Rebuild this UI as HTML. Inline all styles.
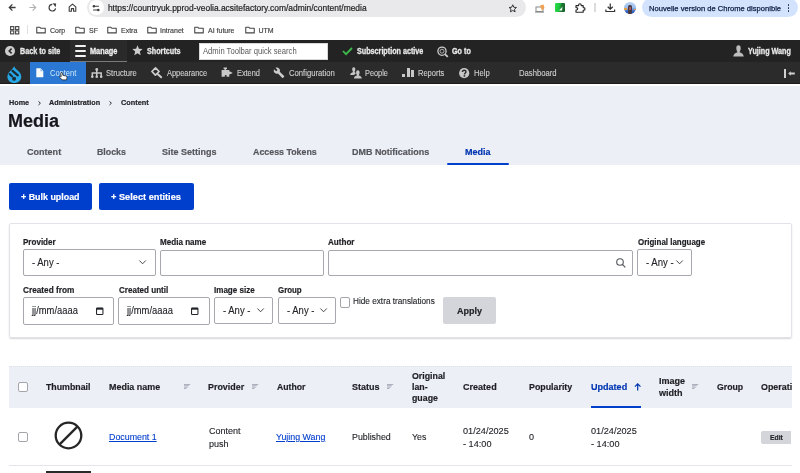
<!DOCTYPE html>
<html><head><meta charset="utf-8">
<style>
*{box-sizing:border-box;margin:0;padding:0}
html,body{width:800px;height:473px;overflow:hidden;background:#fff;font-family:"Liberation Sans", sans-serif}
body{position:relative}
.a{position:absolute;white-space:nowrap;line-height:1}
svg.a{overflow:visible}
</style></head><body>
<div id="root" style="position:absolute;left:0;top:0;width:800px;height:473px;will-change:transform">
<div class="a" style="left:0px;top:0px;width:800px;height:21px;background:#fff"></div>
<svg class="a" style="left:8px;top:3px;" width="9" height="9" viewBox="0 0 9 9"><path d="M7.6 4.5H1.6M4.4 1.4L1.3 4.5L4.4 7.6" fill="none" stroke="#3c3c3c" stroke-width="1.3"/></svg>
<svg class="a" style="left:28px;top:3px;" width="9" height="9" viewBox="0 0 9 9"><path d="M1.4 4.5H7.4M4.6 1.4L7.7 4.5L4.6 7.6" fill="none" stroke="#b0b0b0" stroke-width="1.1"/></svg>
<svg class="a" style="left:48px;top:3px;" width="9" height="9" viewBox="0 0 9 9"><path d="M7.6 5.4A3.3 3.3 0 1 1 4.3 1.4" fill="none" stroke="#3c3c3c" stroke-width="1.15"/><path d="M4.6 0.2L8.2 0.6L7.6 4.2Z" fill="#3c3c3c"/></svg>
<svg class="a" style="left:68px;top:2.9px;" width="9" height="9" viewBox="0 0 9 9"><path d="M1.2 8.2V3.9L4.5 1.1L7.8 3.9V8.2H5.6V5.6H3.4V8.2Z" fill="none" stroke="#3c3c3c" stroke-width="1.1" stroke-linejoin="round"/></svg>
<div class="a" style="left:87px;top:-2px;width:439px;height:18.6px;background:#e9e9eb;border-radius:9.5px"></div>
<div class="a" style="left:89px;top:0px;width:14.5px;height:14.5px;border-radius:50%;background:#fff"></div>
<svg class="a" style="left:92px;top:3.5px;" width="9" height="8" viewBox="0 0 9 8"><path d="M1.9 2.3H6.9M1.1 6H6.3" stroke="#3c3c3c" stroke-width="1.1"/><circle cx="1.9" cy="2.2" r="1.2" fill="#3c3c3c"/><circle cx="6.3" cy="6" r="1.25" fill="#3c3c3c"/></svg>
<div class="a" style="left:107.90px;top:4px;font-size:8.450px;font-weight:normal;color:#1f1f1f;-webkit-text-stroke:0.2px currentColor;">https://countryuk.pprod-veolia.acsitefactory.com/admin/content/media</div>
<svg class="a" style="left:507.5px;top:3.5px;" width="9.5" height="9" viewBox="0 0 10 10"><path d="M5 0.9L6.2 3.6L9.1 3.9L6.9 5.8L7.6 8.7L5 7.2L2.4 8.7L3.1 5.8L0.9 3.9L3.8 3.6Z" fill="none" stroke="#333" stroke-width="1.1" stroke-linejoin="round"/></svg>
<svg class="a" style="left:535px;top:3.5px;" width="11" height="9" viewBox="0 0 11 9"><rect x="1" y="3" width="7" height="4.5" fill="none" stroke="#8a8a8a" stroke-width="1"/><path d="M0 8.2H9" stroke="#8a8a8a" stroke-width="0.9"/><path d="M5 1.5L8.5 0.5L9.5 4L7 6.5Z" fill="#f0a050"/></svg>
<div class="a" style="left:555px;top:3.2px;width:9.600000000000023px;height:9.0px;background:linear-gradient(100deg,#2ee04a 0%,#1cc23a 45%,#1d7a34 60%,#1a5a2a 100%);border-radius:1px"></div>
<svg class="a" style="left:557.5px;top:5.5px;" width="5" height="5" viewBox="0 0 5 5"><path d="M1 4.5L4.5 0.8L4 4.5Z" fill="#f0fff0"/></svg>
<svg class="a" style="left:575px;top:3px;" width="11" height="10" viewBox="0 0 11 10"><path d="M1 2.6H3.6V2A1.3 1.3 0 0 1 6.2 2V2.6H8.2V4.6H8.7A1.3 1.3 0 0 1 8.7 7.2H8.2V9.2H1V7H1.5A1.2 1.2 0 0 0 1.5 4.6H1Z" fill="none" stroke="#2a2a2a" stroke-width="1.15" stroke-linejoin="round"/></svg>
<div class="a" style="left:594px;top:3px;width:1.5px;height:8.6px;background:#dcdcdc"></div>
<svg class="a" style="left:604.5px;top:3px;" width="10.5" height="9.5" viewBox="0 0 10.5 9.5"><path d="M5.25 0.5V6M2.7 3.7L5.25 6.2L7.8 3.7M0.9 6.6V8.5H9.6V6.6" fill="none" stroke="#333" stroke-width="1.2"/></svg>
<div class="a" style="left:624px;top:2px;width:12px;height:11.5px;border-radius:50%;overflow:hidden;background:linear-gradient(180deg,#b9d2f5 0%,#9fc0ee 45%,#3d6fc8 75%,#1f48a8 100%)"><div style="position:absolute;left:0;top:6px;width:3px;height:1.6px;background:#e8a040"></div><div style="position:absolute;right:0;top:7px;width:2.5px;height:1.4px;background:#e89a50"></div><div style="position:absolute;left:4.2px;top:2.8px;width:3.8px;height:9px;border-radius:1.8px 1.8px 0 0;background:#4a3a44"></div><div style="position:absolute;left:5px;top:5px;width:2.2px;height:2.5px;background:#a0585a"></div></div>
<div class="a" style="left:642.2px;top:-2px;width:155.39999999999998px;height:19px;background:#d3e3fd;border-radius:9.5px"></div>
<div class="a" style="left:649.00px;top:5px;font-size:7.750px;font-weight:normal;color:#0b1d42;transform:scaleX(0.9793);transform-origin:0 0;-webkit-text-stroke:0.25px currentColor;">Nouvelle version de Chrome disponible</div>
<div class="a" style="left:787.6px;top:4.2px;width:1.8px;height:1.8px;border-radius:50%;background:#1c2a48;box-shadow:0 3px 0 #1c2a48,0 6px 0 #1c2a48"></div>
<div class="a" style="left:0px;top:21px;width:800px;height:19px;background:#fff"></div>
<svg class="a" style="left:10px;top:25.5px;" width="9.5" height="8.5" viewBox="0 0 9.5 8.5"><rect x="0.6" y="0.6" width="3.2" height="3" fill="none" stroke="#444" stroke-width="1.1"/><rect x="5.6" y="0.6" width="3.2" height="3" fill="none" stroke="#444" stroke-width="1.1"/><rect x="0.6" y="4.9" width="3.2" height="3" fill="none" stroke="#444" stroke-width="1.1"/><rect x="5.6" y="4.9" width="3.2" height="3" fill="none" stroke="#444" stroke-width="1.1"/></svg>
<div class="a" style="left:27px;top:25px;width:1px;height:9px;background:#e0e0e0"></div>
<svg class="a" style="left:36px;top:25.8px;" width="10" height="7.6" viewBox="0 0 9.7 7.6"><path d="M0.6 1.2H3.5L4.5 2.2H9.1V6.9H0.6Z" fill="none" stroke="#444" stroke-width="1.05" stroke-linejoin="round"/></svg>
<div class="a" style="left:50.00px;top:27px;font-size:7.000px;font-weight:normal;color:#444;-webkit-text-stroke:0.18px currentColor;">Corp</div>
<svg class="a" style="left:75px;top:25.8px;" width="10" height="7.6" viewBox="0 0 9.7 7.6"><path d="M0.6 1.2H3.5L4.5 2.2H9.1V6.9H0.6Z" fill="none" stroke="#444" stroke-width="1.05" stroke-linejoin="round"/></svg>
<div class="a" style="left:89.00px;top:27px;font-size:7.000px;font-weight:normal;color:#444;-webkit-text-stroke:0.18px currentColor;">SF</div>
<svg class="a" style="left:107px;top:25.8px;" width="10" height="7.6" viewBox="0 0 9.7 7.6"><path d="M0.6 1.2H3.5L4.5 2.2H9.1V6.9H0.6Z" fill="none" stroke="#444" stroke-width="1.05" stroke-linejoin="round"/></svg>
<div class="a" style="left:121.00px;top:27px;font-size:7.000px;font-weight:normal;color:#444;-webkit-text-stroke:0.18px currentColor;">Extra</div>
<svg class="a" style="left:146.5px;top:25.8px;" width="10" height="7.6" viewBox="0 0 9.7 7.6"><path d="M0.6 1.2H3.5L4.5 2.2H9.1V6.9H0.6Z" fill="none" stroke="#444" stroke-width="1.05" stroke-linejoin="round"/></svg>
<div class="a" style="left:160.00px;top:27px;font-size:7.000px;font-weight:normal;color:#444;-webkit-text-stroke:0.18px currentColor;">Intranet</div>
<svg class="a" style="left:194px;top:25.8px;" width="10" height="7.6" viewBox="0 0 9.7 7.6"><path d="M0.6 1.2H3.5L4.5 2.2H9.1V6.9H0.6Z" fill="none" stroke="#444" stroke-width="1.05" stroke-linejoin="round"/></svg>
<div class="a" style="left:208.00px;top:27px;font-size:7.000px;font-weight:normal;color:#444;-webkit-text-stroke:0.18px currentColor;">AI future</div>
<svg class="a" style="left:245px;top:25.8px;" width="10" height="7.6" viewBox="0 0 9.7 7.6"><path d="M0.6 1.2H3.5L4.5 2.2H9.1V6.9H0.6Z" fill="none" stroke="#444" stroke-width="1.05" stroke-linejoin="round"/></svg>
<div class="a" style="left:258.50px;top:27px;font-size:7.000px;font-weight:normal;color:#444;-webkit-text-stroke:0.18px currentColor;">UTM</div>
<div class="a" style="left:0px;top:40px;width:800px;height:21.6px;background:#232323"></div>
<div class="a" style="left:69.6px;top:40px;width:57.400000000000006px;height:21.6px;background:#2a2a2a"></div>
<div class="a" style="left:69.6px;top:60.8px;width:57.400000000000006px;height:0.8000000000000043px;background:#7a7a7a"></div>
<div class="a" style="left:5px;top:45.6px;width:10.4px;height:10.6px;border-radius:50%;background:#cdcdcd"></div>
<svg class="a" style="left:7.5px;top:48px;" width="5" height="6" viewBox="0 0 5 6"><path d="M3.6 0.6L1.2 3L3.6 5.4" fill="none" stroke="#232323" stroke-width="1.5"/></svg>
<div class="a" style="left:20.00px;top:48px;font-size:8.136px;font-weight:bold;color:#e8e8e8;transform:scaleX(0.8850);transform-origin:0 0;-webkit-text-stroke:0.30px currentColor;">Back to site</div>
<div class="a" style="left:74.5px;top:44.6px;width:11.700000000000003px;height:2.0px;background:#f2f2f2;border-radius:1px"></div>
<div class="a" style="left:74.5px;top:49.6px;width:11.700000000000003px;height:2.0px;background:#f2f2f2;border-radius:1px"></div>
<div class="a" style="left:74.5px;top:54.6px;width:11.700000000000003px;height:2.0px;background:#f2f2f2;border-radius:1px"></div>
<div class="a" style="left:89.80px;top:47px;font-size:8.305px;font-weight:bold;color:#f0f0f0;transform:scaleX(0.8850);transform-origin:0 0;-webkit-text-stroke:0.30px currentColor;">Manage</div>
<svg class="a" style="left:131.8px;top:44.8px;" width="11" height="11" viewBox="0 0 10 10"><path d="M5 0.3L6.3 3.4L9.7 3.7L7.1 5.9L7.9 9.3L5 7.5L2.1 9.3L2.9 5.9L0.3 3.7L3.7 3.4Z" fill="#cdcdcd"/></svg>
<div class="a" style="left:147.00px;top:48px;font-size:8.136px;font-weight:bold;color:#e8e8e8;transform:scaleX(0.8850);transform-origin:0 0;-webkit-text-stroke:0.30px currentColor;">Shortcuts</div>
<div class="a" style="left:199px;top:43px;width:129px;height:16.6px;background:#fff;border:1px solid #d8d8d8"></div>
<div class="a" style="left:203.00px;top:47px;font-size:8.644px;font-weight:normal;color:#5a5a5a;transform:scaleX(0.8850);transform-origin:0 0;-webkit-text-stroke:0.18px currentColor;-webkit-text-stroke:0;">Admin Toolbar quick search</div>
<svg class="a" style="left:341.5px;top:47.2px;" width="11" height="8.5" viewBox="0 0 11 8.5"><path d="M1 4L4 7.2L10 1" fill="none" stroke="#3dbb4c" stroke-width="1.8"/></svg>
<div class="a" style="left:356.60px;top:48px;font-size:8.136px;font-weight:bold;color:#e8e8e8;transform:scaleX(0.8850);transform-origin:0 0;-webkit-text-stroke:0.30px currentColor;">Subscription active</div>
<svg class="a" style="left:436.5px;top:45.5px;" width="12.5" height="12" viewBox="0 0 12.5 12"><circle cx="5" cy="5.2" r="4.1" fill="none" stroke="#cdcdcd" stroke-width="1.3"/><circle cx="5" cy="5.2" r="2" fill="none" stroke="#bdbdbd" stroke-width="0.9"/><path d="M8.1 8.3L10.8 10.9" stroke="#cdcdcd" stroke-width="1.8"/></svg>
<div class="a" style="left:452.30px;top:48px;font-size:8.136px;font-weight:bold;color:#e8e8e8;transform:scaleX(0.8850);transform-origin:0 0;-webkit-text-stroke:0.30px currentColor;">Go to</div>
<svg class="a" style="left:732.8px;top:44.6px;" width="11" height="11.6" viewBox="0 0 11 11.6"><path d="M5.5 0.3C3.9 0.3 3.3 1.6 3.3 3.3C3.3 5 4.1 6.6 4.5 7.2C2.8 7.8 0.6 8.5 0.2 11.4H10.8C10.4 8.5 8.2 7.8 6.5 7.2C6.9 6.6 7.7 5 7.7 3.3C7.7 1.6 7.1 0.3 5.5 0.3Z" fill="#bdbdbd"/></svg>
<div class="a" style="left:748.00px;top:48px;font-size:8.136px;font-weight:bold;color:#e8e8e8;transform:scaleX(0.8850);transform-origin:0 0;-webkit-text-stroke:0.30px currentColor;">Yujing Wang</div>
<div class="a" style="left:0px;top:61.6px;width:800px;height:20.999999999999993px;background:#2b2b2b"></div>
<div class="a" style="left:0px;top:82.6px;width:800px;height:1.4000000000000057px;background:#1b1b1b"></div>
<div class="a" style="left:0px;top:84px;width:800px;height:2px;background:#fff"></div>
<svg class="a" style="left:6.5px;top:65.5px;" width="14.5" height="17.2" viewBox="0 0 14.5 17.2"><path d="M7.05 0.2C6.2 2.6 4.2 3.9 2.3 5.9C0.9 7.4 0.4 9.2 0.4 10.8C0.4 14.5 3.4 17.1 7.25 17.1C11.1 17.1 14.3 14.5 14.3 10.8C14.3 9.2 13.8 7.4 12.3 5.9C10.3 3.9 7.9 2.6 7.05 0.2Z" fill="#27a6e6"/><path d="M5.6 4.9L10.8 9.3" stroke="#1d2a33" stroke-width="2.4" stroke-linecap="round"/><path d="M2.7 8.0L5.1 10.5" stroke="#1d2a33" stroke-width="2.1" stroke-linecap="round"/><circle cx="7.1" cy="12.7" r="2.0" fill="#1d2a33"/></svg>
<div class="a" style="left:29.5px;top:61.6px;width:56.8px;height:21.999999999999993px;background:#2b78d4"></div>
<svg class="a" style="left:36px;top:68px;" width="7.6" height="9.5" viewBox="0 0 7.6 9.5"><path d="M0.3 0.3H4.6L7.3 3V9.2H0.3Z" fill="#fafafa"/><path d="M4.4 0.4V3.2H7.2" fill="#9cc0ec"/></svg>
<div class="a" style="left:49.70px;top:69px;font-size:8.475px;font-weight:normal;color:#cfeaf8;transform:scaleX(0.8850);transform-origin:0 0;-webkit-text-stroke:0.12px currentColor;-webkit-text-stroke:0;">Content</div>
<svg class="a" style="left:59.3px;top:71.6px;" width="9" height="8.4" viewBox="0 0 9 8.4"><path d="M2.2 0.6C2.8 0.3 3.4 0.6 3.5 1.2L3.8 3.2L6.6 3.9C7.6 4.2 8.2 4.9 8 5.9L7.5 7.9H3.2L0.7 5.3C0.3 4.8 0.8 4.1 1.5 4.3L2.2 4.6L1.8 1.4C1.7 1 1.9 0.7 2.2 0.6Z" fill="#fff" stroke="#1a1a1a" stroke-width="0.8"/></svg>
<svg class="a" style="left:90.8px;top:67.8px;" width="11.5" height="10.5" viewBox="0 0 11.5 10.5"><circle cx="5.75" cy="1.5" r="1.4" fill="#c8c8c8"/><path d="M5.75 1.5V9M1.3 9V5.1H10.2V9" fill="none" stroke="#c8c8c8" stroke-width="1.5"/><circle cx="1.3" cy="8.8" r="1.3" fill="#c8c8c8"/><circle cx="5.75" cy="8.8" r="1.3" fill="#c8c8c8"/><circle cx="10.2" cy="8.8" r="1.3" fill="#c8c8c8"/></svg>
<div class="a" style="left:106.00px;top:69px;font-size:8.588px;font-weight:normal;color:#cfcfcf;transform:scaleX(0.8850);transform-origin:0 0;-webkit-text-stroke:0.12px currentColor;">Structure</div>
<svg class="a" style="left:151.3px;top:67.4px;" width="11.5" height="11" viewBox="0 0 11.5 11"><path d="M4.5 0.9L8.1 4.5L4.4 8.1L0.9 4.5Z" fill="none" stroke="#cdcdcd" stroke-width="1.7" stroke-linejoin="round"/><path d="M6.9 7.2L10.2 10.3" stroke="#cdcdcd" stroke-width="1.9" stroke-linecap="round"/></svg>
<div class="a" style="left:166.80px;top:69px;font-size:8.418px;font-weight:normal;color:#cfcfcf;transform:scaleX(0.8850);transform-origin:0 0;-webkit-text-stroke:0.12px currentColor;">Appearance</div>
<svg class="a" style="left:221px;top:67.4px;" width="12" height="10.2" viewBox="0 0 12 10.2"><path d="M2.6 0.5H6V2.1H5.1V3H8.3V4.5H9.1L11.8 5.9L9.1 7.2H8.3V9.7H5.6V8.8A0.9 0.9 0 0 0 3.8 8.8V9.7H0.6V3H3.5V2.1H2.6Z" fill="#c8c8c8"/></svg>
<div class="a" style="left:236.60px;top:69px;font-size:8.305px;font-weight:normal;color:#cfcfcf;transform:scaleX(0.8850);transform-origin:0 0;-webkit-text-stroke:0.12px currentColor;">Extend</div>
<svg class="a" style="left:273.3px;top:67.0px;" width="12" height="11.5" viewBox="0 0 24 24"><path d="M22.7 19l-9.1-9.1c.9-2.3.4-5-1.5-6.9-2-2-5-2.4-7.4-1.3L9 6 6 9 1.6 4.7C.4 7.1.9 10.1 2.9 12.1c1.9 1.9 4.6 2.4 6.9 1.5l9.1 9.1c.4.4 1 .4 1.4 0l2.3-2.3c.5-.4.5-1.1.1-1.4z" fill="#cdcdcd"/></svg>
<div class="a" style="left:289.40px;top:69px;font-size:8.701px;font-weight:normal;color:#cfcfcf;transform:scaleX(0.8850);transform-origin:0 0;-webkit-text-stroke:0.12px currentColor;">Configuration</div>
<svg class="a" style="left:349.6px;top:67.2px;" width="12" height="11.6" viewBox="0 0 12 11.6"><path d="M3.7 0.3C2.6 0.3 2.2 1.2 2.2 2.3C2.2 3.5 2.8 4.6 3.1 5C1.9 5.5 0.4 5.9 0.1 7.9H4.2C4.6 7.2 5.2 6.8 5.8 6.5L5.9 5.9L4.4 5C4.8 4.6 5.3 3.5 5.3 2.3C5.3 1.2 4.9 0.3 3.7 0.3Z" fill="#c4c4c4"/><path d="M7.8 3.2C6.6 3.2 6.1 4.2 6.1 5.4C6.1 6.7 6.8 7.9 7.1 8.3C5.8 8.8 4.2 9.3 3.9 11.4H11.8C11.5 9.3 9.9 8.8 8.6 8.3C8.9 7.9 9.6 6.7 9.6 5.4C9.6 4.2 9.1 3.2 7.8 3.2Z" fill="#c4c4c4"/></svg>
<div class="a" style="left:365.40px;top:69px;font-size:8.305px;font-weight:normal;color:#cfcfcf;transform:scaleX(0.8850);transform-origin:0 0;-webkit-text-stroke:0.12px currentColor;">People</div>
<div class="a" style="left:402.2px;top:73.8px;width:3.0px;height:3.6000000000000085px;background:#c8c8c8"></div>
<div class="a" style="left:406.6px;top:67.8px;width:3.1999999999999886px;height:9.600000000000009px;background:#c8c8c8"></div>
<div class="a" style="left:411px;top:70px;width:3px;height:7.400000000000006px;background:#c8c8c8"></div>
<div class="a" style="left:417.70px;top:69px;font-size:8.475px;font-weight:normal;color:#cfcfcf;transform:scaleX(0.8850);transform-origin:0 0;-webkit-text-stroke:0.12px currentColor;">Reports</div>
<svg class="a" style="left:458.8px;top:67.8px;" width="10.4" height="10.4" viewBox="0 0 10.4 10.4"><circle cx="5.2" cy="5.2" r="5.1" fill="#c8c8c8"/><path d="M3.4 4C3.4 2.9 4.2 2.2 5.2 2.2C6.3 2.2 7 2.9 7 3.8C7 5 5.5 5.1 5.5 6.4" fill="none" stroke="#2b2b2b" stroke-width="1.4"/><rect x="4.6" y="7.2" width="1.6" height="1.5" fill="#2b2b2b"/></svg>
<div class="a" style="left:473.80px;top:69px;font-size:8.588px;font-weight:normal;color:#cfcfcf;transform:scaleX(0.8850);transform-origin:0 0;-webkit-text-stroke:0.12px currentColor;">Help</div>
<div class="a" style="left:518.70px;top:69px;font-size:8.701px;font-weight:normal;color:#cfcfcf;transform:scaleX(0.8850);transform-origin:0 0;-webkit-text-stroke:0.12px currentColor;">Dashboard</div>
<div class="a" style="left:784px;top:68.7px;width:2.2000000000000455px;height:8.899999999999991px;background:#d0d0d0"></div>
<svg class="a" style="left:788.3px;top:70.6px;" width="7" height="5" viewBox="0 0 7 5"><path d="M0.2 2.5L2.7 0.2V1.5H6.8V3.5H2.7V4.8Z" fill="#d0d0d0"/></svg>
<div class="a" style="left:0px;top:86px;width:800px;height:78.5px;background:#edeff6"></div>
<div class="a" style="left:9.00px;top:99px;font-size:7.830px;font-weight:bold;color:#232429;transform:scaleX(0.9259);transform-origin:0 0;-webkit-text-stroke:0.20px currentColor;">Home</div>
<svg class="a" style="left:37.7px;top:100.7px;" width="3" height="4.4" viewBox="0 0 3 4.4"><path d="M0.5 0.4L2.4 2.2L0.5 4" fill="none" stroke="#2a2b30" stroke-width="1"/></svg>
<div class="a" style="left:49.40px;top:99px;font-size:7.830px;font-weight:bold;color:#232429;transform:scaleX(0.9259);transform-origin:0 0;-webkit-text-stroke:0.20px currentColor;">Administration</div>
<svg class="a" style="left:108.8px;top:100.7px;" width="3" height="4.4" viewBox="0 0 3 4.4"><path d="M0.5 0.4L2.4 2.2L0.5 4" fill="none" stroke="#2a2b30" stroke-width="1"/></svg>
<div class="a" style="left:120.60px;top:99px;font-size:7.938px;font-weight:bold;color:#232429;transform:scaleX(0.9259);transform-origin:0 0;-webkit-text-stroke:0.20px currentColor;">Content</div>
<div class="a" style="left:8.43px;top:112px;font-size:18.564px;font-weight:bold;color:#16171c;transform:scaleX(0.9731);transform-origin:0 0;-webkit-text-stroke:0.20px currentColor;">Media</div>
<div class="a" style="left:26.80px;top:147px;font-size:9.774px;font-weight:bold;color:#55565b;transform:scaleX(0.9259);transform-origin:0 0;-webkit-text-stroke:0.20px currentColor;">Content</div>
<div class="a" style="left:97.20px;top:147px;font-size:9.504px;font-weight:bold;color:#55565b;transform:scaleX(0.9259);transform-origin:0 0;-webkit-text-stroke:0.20px currentColor;">Blocks</div>
<div class="a" style="left:161.70px;top:147px;font-size:9.720px;font-weight:bold;color:#55565b;transform:scaleX(0.9259);transform-origin:0 0;-webkit-text-stroke:0.20px currentColor;">Site Settings</div>
<div class="a" style="left:252.50px;top:147px;font-size:9.558px;font-weight:bold;color:#55565b;transform:scaleX(0.9259);transform-origin:0 0;-webkit-text-stroke:0.20px currentColor;">Access Tokens</div>
<div class="a" style="left:351.70px;top:147px;font-size:9.688px;font-weight:bold;color:#55565b;transform:scaleX(0.9259);transform-origin:0 0;-webkit-text-stroke:0.20px currentColor;">DMB Notifications</div>
<div class="a" style="left:465.00px;top:147px;font-size:9.720px;font-weight:bold;color:#0036b1;transform:scaleX(0.9259);transform-origin:0 0;-webkit-text-stroke:0.20px currentColor;">Media</div>
<div class="a" style="left:447px;top:163px;width:62px;height:2.4000000000000057px;background:#003ecc;border-radius:2px"></div>
<div class="a" style="left:9px;top:183px;width:83.3px;height:26.80000000000001px;background:#003ecc;border-radius:2px"></div>
<div class="a" style="left:20.50px;top:192px;font-size:9.612px;font-weight:bold;color:#fff;transform:scaleX(0.9246);transform-origin:0 0;-webkit-text-stroke:0.20px currentColor;">+ Bulk upload</div>
<div class="a" style="left:99px;top:183px;width:94.5px;height:26.80000000000001px;background:#003ecc;border-radius:2px"></div>
<div class="a" style="left:110.50px;top:192px;font-size:9.828px;font-weight:bold;color:#fff;transform:scaleX(0.9392);transform-origin:0 0;-webkit-text-stroke:0.20px currentColor;">+ Select entities</div>
<div class="a" style="left:9px;top:223px;width:782.5px;height:115px;border:1px solid #e2e3e8;border-radius:2px;box-shadow:0 1px 1.5px rgba(0,0,0,0.16)"></div>
<div class="a" style="left:23.00px;top:238px;font-size:8.694px;font-weight:bold;color:#1e1f24;transform:scaleX(0.9259);transform-origin:0 0;-webkit-text-stroke:0.20px currentColor;">Provider</div>
<div class="a" style="left:23px;top:249.4px;width:133.2px;height:26.899999999999995px;border:1px solid #a6a8ad;border-radius:2px;background:#fff"></div>
<div class="a" style="left:32.00px;top:258px;font-size:10.260px;font-weight:normal;color:#232429;transform:scaleX(0.9259);transform-origin:0 0;-webkit-text-stroke:0.12px currentColor;">- Any -</div>
<svg class="a" style="left:139.2px;top:259.9px;" width="7.2" height="4.6" viewBox="0 0 7.2 4.6"><path d="M0.4 0.5L3.6 3.8L6.8 0.5" fill="none" stroke="#2a2b30" stroke-width="0.85"/></svg>
<div class="a" style="left:160.00px;top:238px;font-size:8.748px;font-weight:bold;color:#1e1f24;transform:scaleX(0.9259);transform-origin:0 0;-webkit-text-stroke:0.20px currentColor;">Media name</div>
<div class="a" style="left:160px;top:249.5px;width:163.5px;height:26.400000000000023px;border:1px solid #a6a8ad;border-radius:2px;background:#fff"></div>
<div class="a" style="left:327.80px;top:238px;font-size:8.748px;font-weight:bold;color:#1e1f24;transform:scaleX(0.9259);transform-origin:0 0;-webkit-text-stroke:0.20px currentColor;">Author</div>
<div class="a" style="left:327.7px;top:249.5px;width:305.3px;height:26.400000000000023px;border:1px solid #a6a8ad;border-radius:2px;background:#fff"></div>
<svg class="a" style="left:615.8px;top:257.6px;" width="10" height="10" viewBox="0 0 10 10"><circle cx="4" cy="4" r="3.3" fill="none" stroke="#55565b" stroke-width="1.1"/><path d="M6.4 6.4L9.3 9.3" stroke="#55565b" stroke-width="1.2"/></svg>
<div class="a" style="left:637.80px;top:238px;font-size:8.597px;font-weight:bold;color:#1e1f24;transform:scaleX(0.9259);transform-origin:0 0;-webkit-text-stroke:0.20px currentColor;">Original language</div>
<div class="a" style="left:637.2px;top:249.4px;width:55.09999999999991px;height:26.299999999999972px;border:1px solid #a6a8ad;border-radius:2px;background:#fff"></div>
<div class="a" style="left:646.40px;top:258px;font-size:10.368px;font-weight:normal;color:#232429;transform:scaleX(0.9259);transform-origin:0 0;-webkit-text-stroke:0.12px currentColor;">- Any -</div>
<svg class="a" style="left:676px;top:259.9px;" width="7.2" height="4.6" viewBox="0 0 7.2 4.6"><path d="M0.4 0.5L3.6 3.8L6.8 0.5" fill="none" stroke="#2a2b30" stroke-width="0.85"/></svg>
<div class="a" style="left:22.80px;top:286px;font-size:8.921px;font-weight:bold;color:#1e1f24;transform:scaleX(0.9259);transform-origin:0 0;-webkit-text-stroke:0.20px currentColor;">Created from</div>
<div class="a" style="left:22.8px;top:297px;width:91.2px;height:27.8px;border:1px solid #a6a8ad;border-radius:2px;background:#fff"></div>
<div class="a" style="left:31.60px;top:306px;font-size:10.152px;font-weight:normal;color:#232429;transform:scaleX(0.9259);transform-origin:0 0;-webkit-text-stroke:0.12px currentColor;">jj/mm/aaaa</div>
<svg class="a" style="left:95.8px;top:307.3px;" width="7.5" height="8" viewBox="0 0 7.5 8"><rect x="0.55" y="0.9" width="6.4" height="6.6" rx="0.8" fill="none" stroke="#232429" stroke-width="1.05"/><rect x="0.55" y="0.9" width="6.4" height="1.8" fill="#232429"/></svg>
<div class="a" style="left:118.70px;top:286px;font-size:8.716px;font-weight:bold;color:#1e1f24;transform:scaleX(0.9259);transform-origin:0 0;-webkit-text-stroke:0.20px currentColor;">Created until</div>
<div class="a" style="left:118px;top:297px;width:91.80000000000001px;height:27.8px;border:1px solid #a6a8ad;border-radius:2px;background:#fff"></div>
<div class="a" style="left:127.40px;top:306px;font-size:10.152px;font-weight:normal;color:#232429;transform:scaleX(0.9259);transform-origin:0 0;-webkit-text-stroke:0.12px currentColor;">jj/mm/aaaa</div>
<svg class="a" style="left:191.3px;top:307.3px;" width="7.5" height="8" viewBox="0 0 7.5 8"><rect x="0.55" y="0.9" width="6.4" height="6.6" rx="0.8" fill="none" stroke="#232429" stroke-width="1.05"/><rect x="0.55" y="0.9" width="6.4" height="1.8" fill="#232429"/></svg>
<div class="a" style="left:214.30px;top:286px;font-size:8.683px;font-weight:bold;color:#1e1f24;transform:scaleX(0.9259);transform-origin:0 0;-webkit-text-stroke:0.20px currentColor;">Image size</div>
<div class="a" style="left:214.3px;top:297px;width:59.0px;height:26.8px;border:1px solid #a6a8ad;border-radius:2px;background:#fff"></div>
<div class="a" style="left:223.40px;top:306px;font-size:10.260px;font-weight:normal;color:#232429;transform:scaleX(0.9259);transform-origin:0 0;-webkit-text-stroke:0.12px currentColor;">- Any -</div>
<svg class="a" style="left:256.8px;top:308.2px;" width="7.2" height="4.6" viewBox="0 0 7.2 4.6"><path d="M0.4 0.5L3.6 3.8L6.8 0.5" fill="none" stroke="#2a2b30" stroke-width="0.85"/></svg>
<div class="a" style="left:277.70px;top:286px;font-size:8.532px;font-weight:bold;color:#1e1f24;transform:scaleX(0.9259);transform-origin:0 0;-webkit-text-stroke:0.20px currentColor;">Group</div>
<div class="a" style="left:277.5px;top:297px;width:58.39999999999998px;height:26.8px;border:1px solid #a6a8ad;border-radius:2px;background:#fff"></div>
<div class="a" style="left:286.50px;top:306px;font-size:10.260px;font-weight:normal;color:#232429;transform:scaleX(0.9259);transform-origin:0 0;-webkit-text-stroke:0.12px currentColor;">- Any -</div>
<svg class="a" style="left:319.8px;top:308.2px;" width="7.2" height="4.6" viewBox="0 0 7.2 4.6"><path d="M0.4 0.5L3.6 3.8L6.8 0.5" fill="none" stroke="#2a2b30" stroke-width="0.85"/></svg>
<div class="a" style="left:340.2px;top:297px;width:10.3px;height:10.5px;border:1px solid #a3a5ab;border-radius:2px;background:#fff"></div>
<div class="a" style="left:352.60px;top:297px;font-size:8.888px;font-weight:normal;color:#232429;transform:scaleX(0.9259);transform-origin:0 0;-webkit-text-stroke:0.12px currentColor;">Hide extra translations</div>
<div class="a" style="left:443.3px;top:297.1px;width:52.30000000000001px;height:27.299999999999955px;background:#d4d5da;border-radius:2px"></div>
<div class="a" style="left:457.00px;top:306px;font-size:9.720px;font-weight:bold;color:#232429;transform:scaleX(0.9259);transform-origin:0 0;-webkit-text-stroke:0.20px currentColor;">Apply</div>
<div class="a" style="left:9px;top:365.5px;width:782.5px;height:42px;background:#edeff6;border-top:1px dotted #dfe1e8"></div>
<div class="a" style="left:17.5px;top:382.3px;width:10.2px;height:10px;border:1px solid #a3a5ab;border-radius:2px;background:#fff"></div>
<div class="a" style="left:46.25px;top:382px;font-size:9.504px;font-weight:bold;color:#1e1f24;transform:scaleX(0.9259);transform-origin:0 0;-webkit-text-stroke:0.20px currentColor;">Thumbnail</div>
<div class="a" style="left:109.25px;top:382px;font-size:9.666px;font-weight:bold;color:#1e1f24;transform:scaleX(0.9259);transform-origin:0 0;-webkit-text-stroke:0.20px currentColor;">Media name</div>
<svg class="a" style="left:183.8px;top:383.8px;" width="6.2" height="5" viewBox="0 0 6.2 5"><rect x="0" y="0" width="6.2" height="0.85" fill="#a2a6b3"/><rect x="0" y="1.35" width="5" height="0.85" fill="#a2a6b3"/><rect x="0" y="2.7" width="3.8" height="0.85" fill="#a2a6b3"/><rect x="0" y="4.05" width="2.4" height="0.85" fill="#a2a6b3"/></svg>
<div class="a" style="left:208.40px;top:382px;font-size:9.612px;font-weight:bold;color:#1e1f24;transform:scaleX(0.9259);transform-origin:0 0;-webkit-text-stroke:0.20px currentColor;">Provider</div>
<svg class="a" style="left:251.6px;top:383.8px;" width="6.2" height="5" viewBox="0 0 6.2 5"><rect x="0" y="0" width="6.2" height="0.85" fill="#a2a6b3"/><rect x="0" y="1.35" width="5" height="0.85" fill="#a2a6b3"/><rect x="0" y="2.7" width="3.8" height="0.85" fill="#a2a6b3"/><rect x="0" y="4.05" width="2.4" height="0.85" fill="#a2a6b3"/></svg>
<div class="a" style="left:276.60px;top:382px;font-size:9.396px;font-weight:bold;color:#1e1f24;transform:scaleX(0.9259);transform-origin:0 0;-webkit-text-stroke:0.20px currentColor;">Author</div>
<div class="a" style="left:352.20px;top:382px;font-size:9.720px;font-weight:bold;color:#1e1f24;transform:scaleX(0.9259);transform-origin:0 0;-webkit-text-stroke:0.20px currentColor;">Status</div>
<svg class="a" style="left:386.6px;top:383.8px;" width="6.2" height="5" viewBox="0 0 6.2 5"><rect x="0" y="0" width="6.2" height="0.85" fill="#a2a6b3"/><rect x="0" y="1.35" width="5" height="0.85" fill="#a2a6b3"/><rect x="0" y="2.7" width="3.8" height="0.85" fill="#a2a6b3"/><rect x="0" y="4.05" width="2.4" height="0.85" fill="#a2a6b3"/></svg>
<div class="a" style="left:411.75px;top:371px;font-size:9.504px;font-weight:bold;color:#1e1f24;transform:scaleX(0.9259);transform-origin:0 0;-webkit-text-stroke:0.20px currentColor;">Original</div>
<div class="a" style="left:411.75px;top:382px;font-size:9.504px;font-weight:bold;color:#1e1f24;transform:scaleX(0.9259);transform-origin:0 0;-webkit-text-stroke:0.20px currentColor;">lan-</div>
<div class="a" style="left:411.75px;top:393px;font-size:9.504px;font-weight:bold;color:#1e1f24;transform:scaleX(0.9259);transform-origin:0 0;-webkit-text-stroke:0.20px currentColor;">guage</div>
<div class="a" style="left:463.25px;top:382px;font-size:9.774px;font-weight:bold;color:#1e1f24;transform:scaleX(0.9259);transform-origin:0 0;-webkit-text-stroke:0.20px currentColor;">Created</div>
<div class="a" style="left:529.25px;top:382px;font-size:9.558px;font-weight:bold;color:#1e1f24;transform:scaleX(0.9259);transform-origin:0 0;-webkit-text-stroke:0.20px currentColor;">Popularity</div>
<div class="a" style="left:591.00px;top:382px;font-size:9.774px;font-weight:bold;color:#0036b1;transform:scaleX(0.9259);transform-origin:0 0;-webkit-text-stroke:0.20px currentColor;">Updated</div>
<svg class="a" style="left:633.8px;top:382.8px;" width="7.4" height="8" viewBox="0 0 7.4 8"><path d="M3.7 7.6V1M0.9 3.6L3.7 0.9L6.5 3.6" fill="none" stroke="#0036b1" stroke-width="1.25"/></svg>
<div class="a" style="left:591px;top:405.6px;width:50.200000000000045px;height:2.0px;background:#003ecc"></div>
<div class="a" style="left:659.00px;top:376px;font-size:9.774px;font-weight:bold;color:#1e1f24;transform:scaleX(0.9259);transform-origin:0 0;-webkit-text-stroke:0.20px currentColor;">Image</div>
<div class="a" style="left:659.00px;top:388px;font-size:9.774px;font-weight:bold;color:#1e1f24;transform:scaleX(0.9259);transform-origin:0 0;-webkit-text-stroke:0.20px currentColor;">width</div>
<svg class="a" style="left:692px;top:383.9px;" width="6.2" height="5" viewBox="0 0 6.2 5"><rect x="0" y="0" width="6.2" height="0.85" fill="#a2a6b3"/><rect x="0" y="1.35" width="5" height="0.85" fill="#a2a6b3"/><rect x="0" y="2.7" width="3.8" height="0.85" fill="#a2a6b3"/><rect x="0" y="4.05" width="2.4" height="0.85" fill="#a2a6b3"/></svg>
<div class="a" style="left:716.80px;top:382px;font-size:9.450px;font-weight:bold;color:#1e1f24;transform:scaleX(0.9259);transform-origin:0 0;-webkit-text-stroke:0.20px currentColor;">Group</div>
<div class="a" style="left:761.30px;top:382px;font-size:9.612px;font-weight:bold;color:#1e1f24;transform:scaleX(0.9259);transform-origin:0 0;-webkit-text-stroke:0.20px currentColor;">Operations</div>
<div class="a" style="left:17.5px;top:432px;width:10.2px;height:10px;border:1px solid #a3a5ab;border-radius:2px;background:#fff"></div>
<svg class="a" style="left:53.6px;top:420.6px;" width="29" height="29" viewBox="0 0 29 29"><circle cx="14.5" cy="14.5" r="12.8" fill="none" stroke="#262626" stroke-width="2.3"/><path d="M5.6 23.4L23.4 5.6" stroke="#262626" stroke-width="2.3"/></svg>
<div class="a" style="left:109.25px;top:432px;font-size:9.569px;font-weight:normal;color:#003ecc;transform:scaleX(0.9259);transform-origin:0 0;-webkit-text-stroke:0.12px currentColor;text-decoration:underline;text-underline-offset:1.2px">Document 1</div>
<div class="a" style="left:208.70px;top:426px;font-size:9.720px;font-weight:normal;color:#232429;transform:scaleX(0.9259);transform-origin:0 0;-webkit-text-stroke:0.12px currentColor;">Content</div>
<div class="a" style="left:208.70px;top:439px;font-size:9.720px;font-weight:normal;color:#232429;transform:scaleX(0.9259);transform-origin:0 0;-webkit-text-stroke:0.12px currentColor;">push</div>
<div class="a" style="left:276.20px;top:432px;font-size:9.569px;font-weight:normal;color:#003ecc;transform:scaleX(0.9259);transform-origin:0 0;-webkit-text-stroke:0.12px currentColor;text-decoration:underline;text-underline-offset:1.2px">Yujing Wang</div>
<div class="a" style="left:352.40px;top:432px;font-size:9.536px;font-weight:normal;color:#232429;transform:scaleX(0.9259);transform-origin:0 0;-webkit-text-stroke:0.12px currentColor;">Published</div>
<div class="a" style="left:411.80px;top:432px;font-size:9.504px;font-weight:normal;color:#232429;transform:scaleX(0.9259);transform-origin:0 0;-webkit-text-stroke:0.12px currentColor;">Yes</div>
<div class="a" style="left:463.20px;top:426px;font-size:9.882px;font-weight:normal;color:#232429;transform:scaleX(0.9259);transform-origin:0 0;-webkit-text-stroke:0.12px currentColor;">01/24/2025</div>
<div class="a" style="left:463.20px;top:439px;font-size:9.882px;font-weight:normal;color:#232429;transform:scaleX(0.9259);transform-origin:0 0;-webkit-text-stroke:0.12px currentColor;">- 14:00</div>
<div class="a" style="left:529.00px;top:432px;font-size:9.720px;font-weight:normal;color:#232429;transform:scaleX(0.9259);transform-origin:0 0;-webkit-text-stroke:0.12px currentColor;">0</div>
<div class="a" style="left:591.00px;top:426px;font-size:9.882px;font-weight:normal;color:#232429;transform:scaleX(0.9259);transform-origin:0 0;-webkit-text-stroke:0.12px currentColor;">01/24/2025</div>
<div class="a" style="left:591.00px;top:439px;font-size:9.882px;font-weight:normal;color:#232429;transform:scaleX(0.9259);transform-origin:0 0;-webkit-text-stroke:0.12px currentColor;">- 14:00</div>
<div class="a" style="left:760.8px;top:430.5px;width:30.7px;height:13.8px;background:#d4d5da;border-radius:2px 0 0 2px"></div>
<div class="a" style="left:770.00px;top:434px;font-size:7.668px;font-weight:bold;color:#232429;transform:scaleX(0.8867);transform-origin:0 0;-webkit-text-stroke:0.20px currentColor;">Edit</div>
<div class="a" style="left:9px;top:465.2px;width:782.5px;height:1.1999999999999886px;background:#e4e5ea"></div>
<div class="a" style="left:791.6px;top:360px;width:8.399999999999977px;height:110px;background:#fff"></div>
<div class="a" style="left:45.5px;top:471.2px;width:45.0px;height:1.8000000000000114px;background:#2a2a2a"></div>
</div></body></html>
